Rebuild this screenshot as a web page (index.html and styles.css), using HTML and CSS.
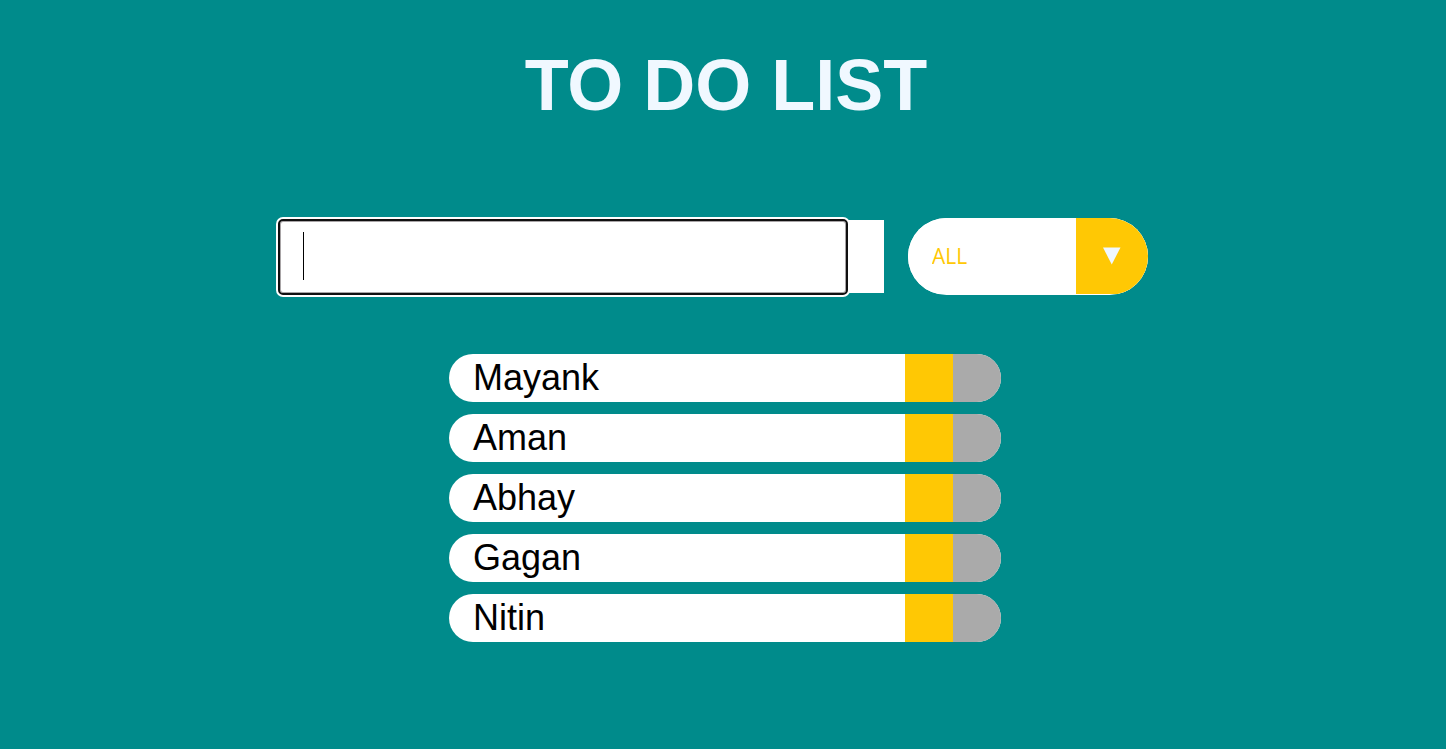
FILE: index.html
```html
<!DOCTYPE html>
<html lang="en">
<head>
<meta charset="utf-8">
<title>To Do List</title>
<link rel="stylesheet" href="styles.css">
</head>
<body>
<header><h1 class="title">TO DO LIST</h1></header>
<main>
<form class="controls">
  <div class="entry">
    <div class="field">
      <input class="todo-input" type="text" aria-label="New task">
      <span class="caret"></span>
    </div>
    <button class="add" type="button" aria-label="Add task"></button>
  </div>
  <div class="filter">
    <select class="filter-select" aria-label="Filter tasks">
      <option>ALL</option>
      <option>COMPLETED</option>
      <option>UNCOMPLETED</option>
    </select>
    <span class="filter-arrow"><svg width="18" height="18" viewBox="0 0 18 18" aria-hidden="true"><path d="M0 0.5H17.5L8.75 17.5Z" fill="#f0f8ff"/></svg></span>
  </div>
</form>
<ul class="todos">
  <li class="todo"><span class="name">Mayank</span><button class="done" type="button" aria-label="Complete Mayank"></button><button class="trash" type="button" aria-label="Delete Mayank"></button></li>
  <li class="todo"><span class="name">Aman</span><button class="done" type="button" aria-label="Complete Aman"></button><button class="trash" type="button" aria-label="Delete Aman"></button></li>
  <li class="todo"><span class="name">Abhay</span><button class="done" type="button" aria-label="Complete Abhay"></button><button class="trash" type="button" aria-label="Delete Abhay"></button></li>
  <li class="todo"><span class="name">Gagan</span><button class="done" type="button" aria-label="Complete Gagan"></button><button class="trash" type="button" aria-label="Delete Gagan"></button></li>
  <li class="todo"><span class="name">Nitin</span><button class="done" type="button" aria-label="Complete Nitin"></button><button class="trash" type="button" aria-label="Delete Nitin"></button></li>
</ul>
</main>
</body>
</html>
```
FILE: styles.css
```css
* { box-sizing: border-box; }

body {
  margin: 0;
  background: #008b8b;
  font-family: "Liberation Sans", Arial, sans-serif;
}

button {
  border: 0;
  padding: 0;
  cursor: pointer;
}

.title {
  margin: 0;
  padding: 43px 0 0 6px;
  color: #f0f8ff;
  font-size: 72px;
  line-height: 84px;
  text-align: center;
}

.controls {
  display: flex;
  justify-content: center;
  align-items: center;
  gap: 24px;
  margin-top: 91px;
  padding-right: 20px;
}

.entry {
  display: flex;
  align-items: center;
}

.field {
  position: relative;
  width: 570px;
}

.todo-input {
  display: block;
  width: 100%;
  height: 76px;
  padding: 0 22px;
  border: 2px solid #101010;
  border-radius: 5px;
  outline: 0;
  box-shadow: 0 0 0 2px #fff, inset 0 0 0 1px #a8a4a6;
  background: #fff;
  font: 36px "Liberation Sans", Arial, sans-serif;
  caret-color: transparent;
}

.caret {
  position: absolute;
  top: 13px;
  left: 25px;
  width: 1px;
  height: 48px;
  background: #000;
}

.add {
  width: 36px;
  height: 73px;
  background: #fff;
}

.filter {
  position: relative;
  width: 240px;
  height: 77px;
  border-radius: 39px;
  background: #fff;
  overflow: hidden;
}

.filter-select {
  appearance: none;
  width: 100%;
  height: 76px;
  padding: 0 80px 0 24px;
  border: 0;
  outline: 0;
  background: #fff;
  color: #ffc804;
  font: 21px "Open Sans", sans-serif;
}

.filter-arrow {
  position: absolute;
  top: 0;
  right: 0;
  display: flex;
  align-items: center;
  justify-content: center;
  width: 72px;
  height: 76px;
  background: #ffc804;
  pointer-events: none;
}

.todos {
  display: flex;
  flex-direction: column;
  align-items: center;
  gap: 12px;
  margin: 59px 0 0;
  padding: 0 0 0 4px;
  list-style: none;
}

.todo {
  display: flex;
  width: 552px;
  height: 48px;
  border-radius: 24px;
  background: #fff;
  overflow: hidden;
}

.name {
  flex: 1;
  padding-left: 24px;
  color: #000;
  font-size: 36px;
  line-height: 48px;
}

.done,
.trash {
  width: 48px;
  background: #ffc804;
}

.trash { background: #aaa; }
```
